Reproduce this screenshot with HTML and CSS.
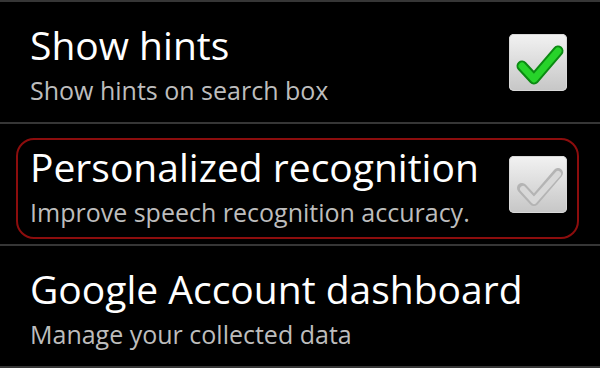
FILE: index.html
```html
<!DOCTYPE html>
<html>
<head>
  <meta charset="UTF-8">
  <title>Voice Search settings</title>
  <link rel="stylesheet" href="styles.css">
</head>
<body>
  <div class="prefs">
    <div class="pref">
      <div class="pref-body">
        <div class="text">
          <div class="title">Show hints</div>
          <div class="summary">Show hints on search box</div>
        </div>
        <div class="checkbox">
          <svg width="58" height="57" viewBox="0 0 58 57">
            <polyline points="13,32 25,45 49,17" fill="none" stroke="#0b8a12" stroke-width="11" stroke-linecap="round" stroke-linejoin="round"/>
            <polyline points="13,32 25,45 49,17" fill="none" stroke="#27d32a" stroke-width="7" stroke-linecap="round" stroke-linejoin="round"/>
          </svg>
        </div>
      </div>
    </div>

    <div class="pref">
      <div class="pref-body focused">
        <div class="text">
          <div class="title">Personalized recognition</div>
          <div class="summary">Improve speech recognition accuracy.</div>
        </div>
        <div class="checkbox">
          <svg width="58" height="57" viewBox="0 0 58 57">
            <polyline points="13,32 25,45 49,17" fill="none" stroke="#b4b4b4" stroke-width="10" stroke-linecap="round" stroke-linejoin="round"/>
            <polyline points="14,33 25,45 49,18" fill="none" stroke="#d8d8d8" stroke-width="6" stroke-linecap="round" stroke-linejoin="round"/>
          </svg>
        </div>
      </div>
    </div>

    <div class="pref">
      <div class="pref-body">
        <div class="text">
          <div class="title">Google Account dashboard</div>
          <div class="summary">Manage your collected data</div>
        </div>
      </div>
    </div>
  </div>
</body>
</html>
```

FILE: styles.css
```css
body {
  margin: 0;
  padding: 0;
  background: #000;
  font-family: "Open Sans", "Noto Sans", sans-serif;
}

.prefs {
  width: 600px;
  border-top: 2px solid #363636;
}

.pref {
  height: 122px;
  border-bottom: 2px solid #363636;
  padding: 14px 21px 5px 16px;
  box-sizing: border-box;
  display: flex;
}

.pref-body {
  flex: 1;
  display: flex;
  align-items: flex-start;
  padding: 4px 10px 0 12px;
  border: 2px solid transparent;
  border-radius: 18px;
}

.pref-body.focused {
  border-color: #8c0d0d;
}

.text {
  flex: 1;
}

.title {
  color: #fff;
  font-size: 39px;
  line-height: 46px;
  white-space: nowrap;
}

.summary {
  color: #bdbdbd;
  font-size: 25px;
  line-height: 32px;
  margin-top: 6px;
  white-space: nowrap;
}

.checkbox {
  width: 58px;
  height: 57px;
  margin-top: 12px;
  border-radius: 5px;
  background: linear-gradient(#f2f2f2, #c6c6c6);
  box-shadow: inset 0 0 0 1px #d8d8d8;
}

.checkbox svg {
  display: block;
}
```
